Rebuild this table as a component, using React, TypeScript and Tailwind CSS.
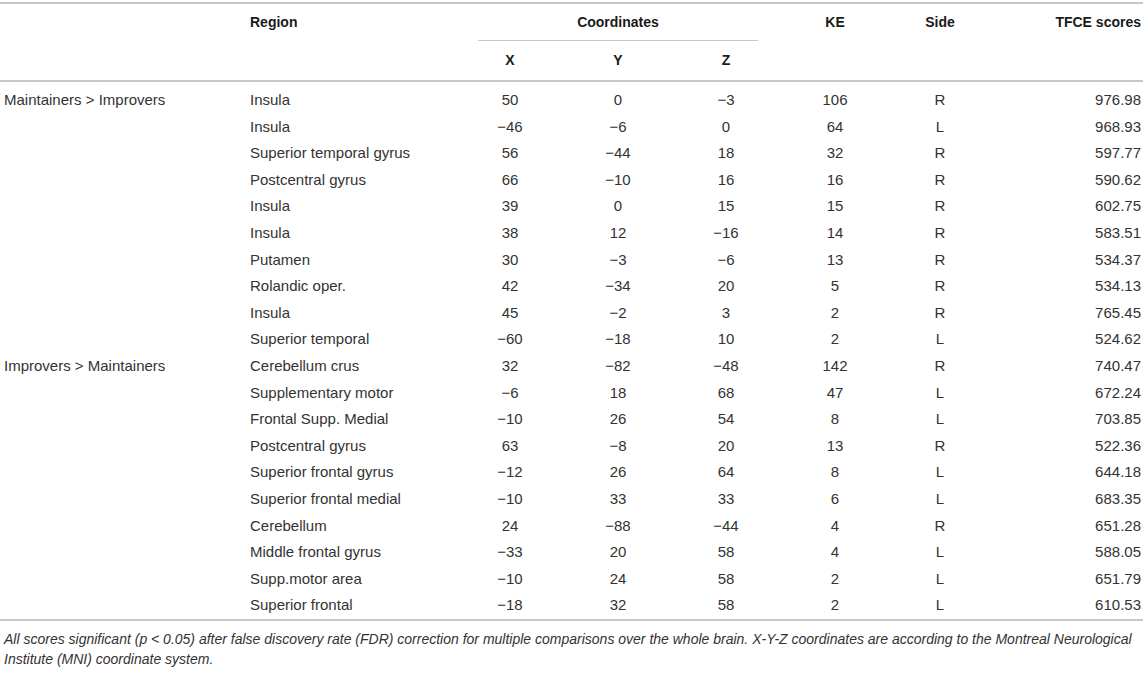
const rows: [string, string, string, string, string, string, string, string][] = [
  ["Maintainers > Improvers", "Insula", "50", "0", "\u22123", "106", "R", "976.98"],
  ["", "Insula", "\u221246", "\u22126", "0", "64", "L", "968.93"],
  ["", "Superior temporal gyrus", "56", "\u221244", "18", "32", "R", "597.77"],
  ["", "Postcentral gyrus", "66", "\u221210", "16", "16", "R", "590.62"],
  ["", "Insula", "39", "0", "15", "15", "R", "602.75"],
  ["", "Insula", "38", "12", "\u221216", "14", "R", "583.51"],
  ["", "Putamen", "30", "\u22123", "\u22126", "13", "R", "534.37"],
  ["", "Rolandic oper.", "42", "\u221234", "20", "5", "R", "534.13"],
  ["", "Insula", "45", "\u22122", "3", "2", "R", "765.45"],
  ["", "Superior temporal", "\u221260", "\u221218", "10", "2", "L", "524.62"],
  ["Improvers > Maintainers", "Cerebellum crus", "32", "\u221282", "\u221248", "142", "R", "740.47"],
  ["", "Supplementary motor", "\u22126", "18", "68", "47", "L", "672.24"],
  ["", "Frontal Supp. Medial", "\u221210", "26", "54", "8", "L", "703.85"],
  ["", "Postcentral gyrus", "63", "\u22128", "20", "13", "R", "522.36"],
  ["", "Superior frontal gyrus", "\u221212", "26", "64", "8", "L", "644.18"],
  ["", "Superior frontal medial", "\u221210", "33", "33", "6", "L", "683.35"],
  ["", "Cerebellum", "24", "\u221288", "\u221244", "4", "R", "651.28"],
  ["", "Middle frontal gyrus", "\u221233", "20", "58", "4", "L", "588.05"],
  ["", "Supp.motor area", "\u221210", "24", "58", "2", "L", "651.79"],
  ["", "Superior frontal", "\u221218", "32", "58", "2", "L", "610.53"],
];

const cols = "grid grid-cols-[246px_210px_108px_108px_108px_110px_100px_1fr]";

export default function App() {
  return (
    <div className="w-[1143px] h-[673px] bg-white overflow-hidden font-['Liberation_Sans',Arial,sans-serif] text-[15px] text-[#333]">
      <div className="mt-[2px] border-t-2 border-[#c6c6c6]" />

      {/* Header */}
      <div className={`${cols} font-bold text-[14px] text-[#1a1a1a]`}>
        <div className="row-span-2" />
        <div className="h-[36px] flex items-center pl-1">Region</div>
        <div className="col-span-3 flex flex-col">
          <div className="h-[36px] flex items-center justify-center">Coordinates</div>
          <div className="mx-[22px] border-t border-[#c6c6c6]" />
        </div>
        <div className="h-[36px] flex items-center justify-center">KE</div>
        <div className="h-[36px] flex items-center justify-center">Side</div>
        <div className="h-[36px] flex items-center justify-end pr-[2px]">TFCE scores</div>
        <div />
        <div className="h-[39px] flex items-center justify-center">X</div>
        <div className="h-[39px] flex items-center justify-center">Y</div>
        <div className="h-[39px] flex items-center justify-center">Z</div>
        <div />
        <div />
        <div />
      </div>
      <div className="border-t-2 border-[#c6c6c6]" />

      {/* Body */}
      <div className="pt-[5px]">
        {rows.map((r, i) => (
          <div key={i} className={`${cols} h-[26.6px] items-center`}>
            <div className="pl-1">{r[0]}</div>
            <div className="pl-1">{r[1]}</div>
            <div className="text-center">{r[2]}</div>
            <div className="text-center">{r[3]}</div>
            <div className="text-center">{r[4]}</div>
            <div className="text-center">{r[5]}</div>
            <div className="text-center">{r[6]}</div>
            <div className="text-right pr-[2px]">{r[7]}</div>
          </div>
        ))}
      </div>
      <div className="border-t-2 border-[#c6c6c6]" />

      <p className="mt-[8px] pl-1 pr-1 italic text-[14px] leading-[20px] text-[#333]">
        All scores significant (p &lt; 0.05) after false discovery rate (FDR) correction for multiple comparisons over the whole brain. X-Y-Z coordinates are according to the Montreal Neurological Institute (MNI) coordinate system.
      </p>
    </div>
  );
}
